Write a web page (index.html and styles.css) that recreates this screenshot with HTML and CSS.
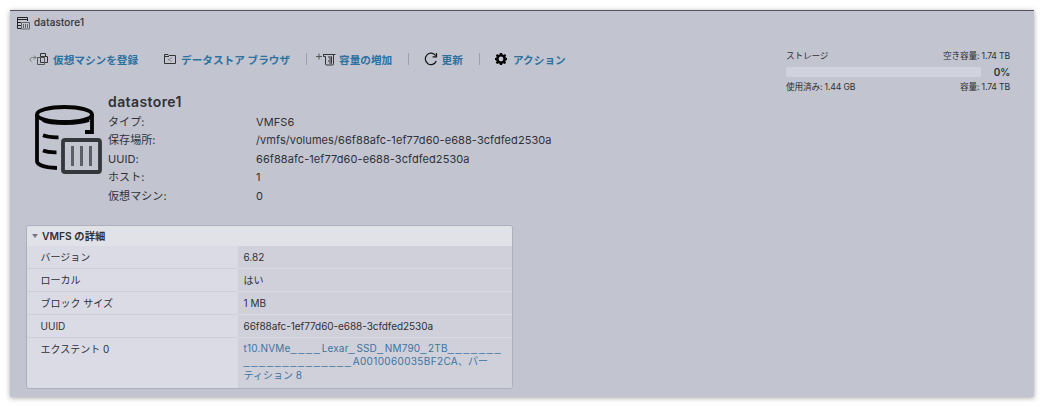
FILE: index.html
```html
<!DOCTYPE html>
<html lang="ja">
<head>
<meta charset="utf-8">
<title>datastore1</title>
<link rel="stylesheet" href="styles.css">
</head>
<body>
<main class="window">
  <header class="titlebar">
    <svg class="title-icon" viewBox="0 0 14 14" fill="none" stroke="#222"><path d="M5 12.500H1.500V1.500h10V5M1.500 3.500h10M2 6.500h3M2 9.500h3"/><path stroke="#666" d="M5.500 6.500h8v6.500h-8zM7.500 8v4M9.500 8v4M11.500 8v4"/></svg>
    <span class="title">datastore1</span>
  </header>
  <div class="top">
    <nav class="toolbar">
      <a class="action register"><svg class="i-register" viewBox="0 0 20 14" fill="none" stroke="#333"><path stroke="#777" d="M2.500 9.500C.2 8.500 1 5.500 3.500 5.500H7M5 3.500 7 5.500 5 7.500"/><path d="M11.500 4V1.500h5V4M11.500 7.500v-3h7v6h-7z"/><path stroke="#555" d="M8.500 5.500h7v7h-7z"/></svg><span>仮想マシンを登録</span></a>
      <a class="action browse"><svg class="i-browse" viewBox="0 0 12 12" fill="none" stroke="#333"><path d="M.5 10.500V1.500H4L5 2.500h6.500v8zM.5 3.500H5"/><path d="M8 5 4 6.700 8 8.500" stroke="#777" stroke-dasharray="1.800 1"/></svg><span>データストア ブラウザ</span></a>
      <i class="sep"></i>
      <a class="action grow"><svg class="i-grow" viewBox="0 0 21 14" fill="none" stroke="#333"><path stroke="#555" d="M0 4.500h6M3 1.500v6"/><path d="M7 2.500h12.500M7.500 2.500v2H9.500V12q0 1 1 1h6q1 0 1-1V2.500M12 5h3.500M13 7h2.500M12 9h3.500M13 11h2.500M15.500 4.500v7"/></svg><span>容量の増加</span></a>
      <i class="sep"></i>
      <a class="action refresh"><svg class="i-refresh" viewBox="0 0 14 14" fill="none" stroke="#151515" stroke-width="1.200"><path d="M12.300 9A5.700 5.700 0 1 1 11.800 3.800M12.500 1v3.900H8.600"/></svg><span>更新</span></a>
      <i class="sep"></i>
      <a class="action menu"><svg class="i-gear" viewBox="0 0 12 12"><path fill="#000" fill-rule="evenodd" d="M4.900 0h2.200l.4 1.500 1 .4 1.400-.8 1.300 1.400-.8 1.300.4 1 1.200.3v1.900l-1.300.4-.4 1 .8 1.300-1.400 1.400-1.300-.8-1 .4L7 12H5l-.4-1.300-1-.4-1.400.8L.8 9.700l.8-1.300-.4-1L0 7V5l1.300-.3.4-1L.9 2.400 2.300 1l1.300.9 1-.4zM6 3.600a2.400 2.400 0 1 0 0 4.800 2.400 2.400 0 0 0 0-4.800z"/></svg><span>アクション</span></a>
    </nav>
    <section class="storage">
      <div class="line"><span>ストレージ</span><span>空き容量: 1.74 TB</span></div>
      <div class="meter"><div class="track"></div><b>0%</b></div>
      <div class="line"><span>使用済み: 1.44 GB</span><span>容量: 1.74 TB</span></div>
    </section>
  </div>
  <section class="summary">
    <svg class="store-icon" viewBox="0 0 70 70" fill="none" stroke="#050505" stroke-width="3.800">
      <ellipse cx="30.500" cy="10.500" rx="27.500" ry="7.500"/>
      <path d="M3 10v47c0 4 8 6.500 20 7M58 10v18h-7M9 16c8 4 36 4 46 0M9 31.300q6 2.300 15.500 2M9 46.500q5 2 13.500 1.800"/>
      <rect x="29" y="36" width="37" height="32" rx="2" stroke="#36373b"/>
      <path stroke="#5d5f66" stroke-width="3" d="M38.500 42v20M47.500 42v20M56.500 42v20"/>
    </svg>
    <div class="facts">
      <h1>datastore1</h1>
      <dl>
        <dt>タイプ:</dt><dd>VMFS6</dd>
        <dt>保存場所:</dt><dd>/vmfs/volumes/66f88afc-1ef77d60-e688-3cfdfed2530a</dd>
        <dt>UUID:</dt><dd>66f88afc-1ef77d60-e688-3cfdfed2530a</dd>
        <dt>ホスト:</dt><dd>1</dd>
        <dt>仮想マシン:</dt><dd>0</dd>
      </dl>
    </div>
  </section>
  <section class="card">
    <h2><i class="caret"></i>VMFS の詳細</h2>
    <div class="row"><div class="key">バージョン</div><div class="value">6.82</div></div>
    <div class="row"><div class="key">ローカル</div><div class="value">はい</div></div>
    <div class="row"><div class="key">ブロック サイズ</div><div class="value">1 MB</div></div>
    <div class="row"><div class="key">UUID</div><div class="value uuid">66f88afc-1ef77d60-e688-3cfdfed2530a</div></div>
    <div class="row extent"><div class="key">エクステント 0</div><div class="value link"><span class="device">t10.NVMe<span class="fill">____</span>Lexar<span class="fill">_</span>SSD<span class="fill">_</span>NM790<span class="fill">_</span>2TB<span class="fill">_______</span></span><br><span class="fill">______________</span><span class="serial">A0010060035BF2CA</span>、パー<br>ティション 8</div></div>
  </section>
</main>
</body>
</html>
```
FILE: styles.css
```css
* { box-sizing: border-box; }
body { margin: 0; padding: 10px 10px 9px 9.5px; background: #fff; height: 406px; overflow: hidden; font-family: Inter, "Noto Sans CJK JP", sans-serif; color: #303137; font-size: 11px; }
.window { height: 387px; background: #c2c4d0; border-top: 1px solid #55565c; box-shadow: 0 1px 5px rgba(0,0,0,.35); overflow: hidden; }
.titlebar { height: 23px; display: flex; align-items: center; padding: 0 0 1px 6.500px; gap: 4px; }
.title-icon { width: 14px; height: 14px; margin-top: 1px; }
.title { font-size: 10px; -webkit-text-stroke: .2px; letter-spacing: .2px; }
.top { display: flex; justify-content: space-between; height: 57px; }
.toolbar { display: flex; align-items: center; height: 32px; margin: 9px 0 0 19.500px; color: #2d719f; font-size: 10.650px; font-weight: 600; white-space: nowrap; }
.action { display: flex; align-items: center; flex: none; }
.register { width: 135px; gap: 4px; }
.browse { width: 142px; gap: 5px; }
.grow { width: 92px; gap: 2px; margin-left: 9px; }
.refresh { width: 55px; gap: 3.500px; margin-left: 15px; }
.menu { gap: 6px; margin-left: 15px; }
.i-register { width: 20px; height: 14px; }
.i-browse { width: 12px; height: 12px; }
.i-grow { width: 21px; height: 14px; }
.i-refresh { width: 14px; height: 14px; }
.i-gear { width: 12px; height: 12px; }
.sep { width: 1px; height: 12px; background: #9d9faa; flex: none; }
.storage { width: 224px; margin: 15px 24px 0 0; font-size: 8.700px; letter-spacing: -.18px; }
.line { display: flex; justify-content: space-between; height: 15px; line-height: 15px; white-space: nowrap; }
.meter { display: flex; justify-content: space-between; align-items: center; height: 16px; font-size: 10px; }
.meter b { font-weight: 600; }
.track { width: 195px; height: 10px; background: #d0d2dd; }
.summary { display: flex; height: 133.500px; }
.store-icon { width: 70px; height: 70px; margin: 13px 0 0 24.500px; flex: none; }
.facts { margin-left: 4px; padding-top: 2px; }
h1 { font-size: 14px; line-height: 18px; font-weight: 600; margin: 0 0 1.500px; letter-spacing: .4px; }
dl { display: grid; grid-template-columns: 148px auto; grid-auto-rows: 18.600px; line-height: 18.600px; margin: 0; letter-spacing: .08px; }
dt, dd { margin: 0; white-space: nowrap; }
.card { width: 487px; margin-left: 16px; border: 1px solid #adb0bf; border-radius: 3px; overflow: hidden; font-size: 10px; background: #dadbe4; height: 164px; }
h2 { margin: 0; height: 20.500px; padding-left: 5.500px; background: #e1e2e7; display: flex; align-items: center; gap: 4px; font-size: 10.300px; font-weight: 600; }
.caret { border: 3.500px solid transparent; border-top: 4px solid #777982; border-bottom: 0; }
.row { display: grid; grid-template-columns: 211.500px 1fr; height: 22.900px; line-height: 22px; }
.key { padding-left: 14px; border-bottom: 1px solid #cecfd8; }
.value { padding-left: 5.500px; background: #cfd0da; border-bottom: 1px solid #dadbe4; white-space: nowrap; }
.uuid { letter-spacing: -.06px; }
.extent { height: 51px; }
.extent .value { line-height: 13.500px; padding-top: 4px; }
.link { color: #3c74a2; }
.device { letter-spacing: .17px; }
.serial { letter-spacing: .35px; }
.fill { font-family: "Liberation Sans", sans-serif; font-size: 11px; line-height: 0; letter-spacing: 1.680px; }
```
